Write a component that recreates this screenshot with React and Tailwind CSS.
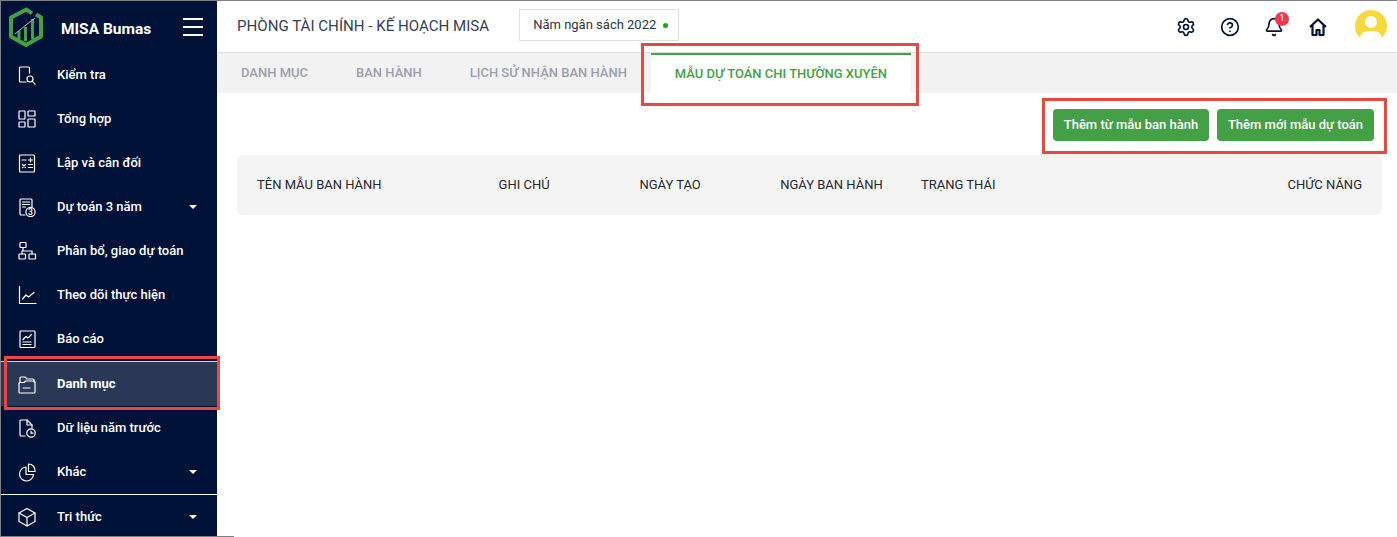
import { Settings, CircleHelp, Bell } from 'lucide-react';

const Ico = ({ children }) => (
  <svg viewBox="0 0 20 20" fill="none" stroke="currentColor" strokeWidth="1.2" strokeLinecap="round" strokeLinejoin="round" className="h-5 w-5 shrink-0 text-white">
    {children}
  </svg>
);

const icons = {
  search: (
    <Ico>
      <path d="M9 17H3.5a1 1 0 0 1-1-1V3a1 1 0 0 1 1-1h8a1 1 0 0 1 1 1v5" />
      <circle cx="13" cy="14" r="3" />
      <path d="M15.2 16.2 18 19" />
    </Ico>
  ),
  grid: (
    <Ico>
      <rect x="2" y="2" width="6" height="8" rx="0.6" />
      <rect x="11" y="2" width="7" height="5" rx="0.6" />
      <rect x="2" y="13" width="6" height="5" rx="0.6" />
      <rect x="11" y="10" width="7" height="8" rx="0.6" />
    </Ico>
  ),
  calc: (
    <Ico>
      <rect x="2.5" y="2" width="15" height="17" rx="1" />
      <path d="M5 7h4M11.5 7h4M13.5 5v4M5.5 11.5l3 3M8.5 11.5l-3 3M11.5 11.5h4M11.5 14.5h4" />
    </Ico>
  ),
  doc3: (
    <Ico>
      <path d="M8 18H4a1 1 0 0 1-1-1V3a1 1 0 0 1 1-1h10a1 1 0 0 1 1 1v7" />
      <path d="M5.5 5h7M5.5 7.5h7M5.5 10h3" />
      <circle cx="13.5" cy="15" r="4.6" />
      <text x="13.5" y="18" textAnchor="middle" fontSize="8.5" fill="currentColor" stroke="none" fontFamily="Roboto, sans-serif">3</text>
    </Ico>
  ),
  tree: (
    <Ico>
      <rect x="3" y="1.5" width="6" height="5" rx="0.5" />
      <rect x="2" y="13" width="6.5" height="5" rx="0.5" />
      <rect x="12" y="13" width="6.5" height="5" rx="0.5" />
      <path d="M6 6.5V10M5 13v-3h10v3" />
    </Ico>
  ),
  chart: (
    <Ico>
      <path d="M2.5 1.5V18.5H19" />
      <path d="M5.5 14l3.5-4 2.5 2 5.5-4.5" />
    </Ico>
  ),
  report: (
    <Ico>
      <rect x="3" y="2" width="15" height="16.5" rx="0.8" />
      <path d="M6 10.5l3-3 2 1.5 3.5-3.5M6 13h8M6 15.5h8" />
    </Ico>
  ),
  folder: (
    <Ico>
      <path d="M3 8.5V4a1 1 0 0 1 1-1h4l2 2h6a1 1 0 0 1 1 1v2" />
      <path d="M2 9.5a1 1 0 0 1 1-1h4l1.5-1.5H17a1 1 0 0 1 1 1v10a1 1 0 0 1-1 1H3a1 1 0 0 1-1-1z" />
      <path d="M6 14h7" />
    </Ico>
  ),
  fileClock: (
    <Ico>
      <path d="M8 18H4a1 1 0 0 1-1-1V3a1 1 0 0 1 1-1h6l5 5v3" />
      <path d="M10 2v5h5" />
      <circle cx="14" cy="15" r="4.2" />
      <path d="M14 13v2.2h2" />
    </Ico>
  ),
  pie: (
    <Ico>
      <path d="M9 5a7 7 0 1 0 7.5 7.5H9z" />
      <path d="M11.5 2a6.5 6.5 0 0 1 6.5 7.5h-6.5z" />
    </Ico>
  ),
  box: (
    <Ico>
      <path d="M10 1.5 18 6v8.5l-8 4.5-8-4.5V6z" />
      <path d="M2 6l8 4.5L18 6M10 10.5V19" />
    </Ico>
  ),
};

const menu = [
  { name: 'Kiểm tra', icon: 'search' },
  { name: 'Tổng hợp', icon: 'grid' },
  { name: 'Lập và cân đối', icon: 'calc' },
  { name: 'Dự toán 3 năm', icon: 'doc3', caret: true },
  { name: 'Phân bổ, giao dự toán', icon: 'tree' },
  { name: 'Theo dõi thực hiện', icon: 'chart' },
  { name: 'Báo cáo', icon: 'report' },
  { name: 'Danh mục', icon: 'folder', active: true },
  { name: 'Dữ liệu năm trước', icon: 'fileClock' },
  { name: 'Khác', icon: 'pie', caret: true },
];

const MenuItem = ({ item }) => (
  <div
    className={`flex shrink-0 items-center gap-[20px] pl-[16px] pr-[20px] text-[13px] text-white ${
      item.active ? 'h-[45px] border-t border-white/80 bg-[#2a3756] font-bold' : 'h-[44px] font-medium'
    }`}
  >
    {icons[item.icon]}
    <span className="flex-1 truncate">{item.name}</span>
    {item.caret && <span className="h-0 w-0 border-x-[4px] border-t-[4px] border-x-transparent border-t-white" />}
  </div>
);

const Sidebar = () => (
  <aside className="flex w-[216px] shrink-0 flex-col bg-[#001238]">
    <div className="flex h-[52px] shrink-0 items-center pl-[7px] pr-[14px]">
      <svg viewBox="0 0 36 40" className="mb-[1px] h-[40px] w-[36px] shrink-0" fill="none">
        <path d="M24 6.5 18.5 2.5 3 10.5v19L18 38l15-8.5v-19L28 7.5" stroke="#43a047" strokeWidth="4" strokeLinejoin="round" />
        <path d="M24.5 12v20M17.5 20v14M11 24v8" stroke="#43a047" strokeWidth="3" />
        <path d="M7 27l11-9 9-7" stroke="#cfd8dc" strokeWidth="0.8" />
      </svg>
      <span className="ml-[17px] mt-[6px] flex-1 text-[15.5px] font-bold text-white">MISA Bumas</span>
      <div className="mb-[1px] flex w-[20px] flex-col gap-[6px]">
        <span className="h-[2px] bg-white" />
        <span className="h-[2px] bg-white" />
        <span className="h-[2px] bg-white" />
      </div>
    </div>
    <div className="flex shrink-0 flex-col">
      {menu.map((item) => (
        <MenuItem key={item.name} item={item} />
      ))}
    </div>
    <div className="shrink-0 border-t border-white">
      <MenuItem item={{ name: 'Tri thức', icon: 'box', caret: true }} />
    </div>
  </aside>
);

const Topbar = () => (
  <header className="flex h-[52px] shrink-0 items-center border-b border-[#e0e0e0] pl-[20px] pr-[10px]">
    <span className="text-[15.1px] text-[#37404f]">PHÒNG TÀI CHÍNH - KẾ HOẠCH MISA</span>
    <div className="mb-[3px] ml-[30px] flex h-[32px] w-[160px] items-center gap-[7px] border border-[#e0e0e0] pl-[13px] text-[13px] text-[#2b3444]">
      Năm ngân sách 2022
      <span className="h-[5px] w-[5px] rounded-full bg-[#1aa31a]" />
    </div>
    <div className="ml-auto flex items-center text-[#001238]">
      <Settings className="h-[20px] w-[20px]" strokeWidth={2} />
      <CircleHelp className="ml-[24px] h-[20px] w-[20px]" strokeWidth={2} />
      <div className="relative ml-[24px]">
        <Bell className="h-[20px] w-[20px]" strokeWidth={2} />
        <span className="absolute -right-[5px] -top-[5px] flex h-[14px] w-[14px] items-center justify-center rounded-full bg-[#f0384f] text-[9px] text-white">1</span>
      </div>
      <svg viewBox="0 0 20 20" className="ml-[24px] h-[20px] w-[20px]" fill="none" stroke="currentColor" strokeWidth="2.2" strokeLinejoin="round">
        <path d="M2 10 10 2.5 18 10M4.5 8.500V18h4v-5h3v5h4V8.500" />
      </svg>
      <div className="relative mb-[2px] ml-[27px] h-[32px] w-[32px] overflow-hidden rounded-full bg-[#f7d93e]">
        <span className="absolute left-[10px] top-[6px] h-[12px] w-[12px] rounded-full bg-white" />
        <span className="absolute left-[5px] top-[21px] h-[16px] w-[22px] rounded-full bg-white" />
      </div>
    </div>
  </header>
);

const tabs = ['DANH MỤC', 'BAN HÀNH', 'LỊCH SỬ NHẬN BAN HÀNH'];
const columns = ['GHI CHÚ', 'NGÀY TẠO', 'NGÀY BAN HÀNH', 'TRẠNG THÁI'];

const App = () => (
  <div className="relative flex h-[537px] w-[1397px] overflow-hidden border-l border-t border-[#7f7f7f] bg-white font-['Roboto',sans-serif]">
    <Sidebar />
    <main className="flex min-w-0 flex-1 flex-col">
      <Topbar />
      <div className="flex h-[40px] shrink-0 bg-[#f2f2f2] text-[13px] font-medium">
        {tabs.map((tab) => (
          <div key={tab} className="flex items-center px-[24px] pb-[1px] text-[#9aa0ab]">{tab}</div>
        ))}
        <div className="flex w-[260px] items-center justify-center border-t-[2px] border-[#43a047] bg-white text-[#43a047]">
          MẪU DỰ TOÁN CHI THƯỜNG XUYÊN
        </div>
      </div>
      <div className="flex justify-end gap-[8px] pr-[23px] pt-[16px]">
        <button className="h-[32px] w-[156px] rounded-[4px] bg-[#43a047] text-[13px] font-medium text-white">Thêm từ mẫu ban hành</button>
        <button className="h-[32px] w-[157px] rounded-[4px] bg-[#43a047] text-[13px] font-medium text-white">Thêm mới mẫu dự toán</button>
      </div>
      <div className="ml-[20px] mr-[15px] mt-[14px] flex h-[60px] items-center rounded-[6px] bg-[#f4f4f4] pl-[20px] pr-[20px] text-[13px] text-[#26262e]">
        <span className="w-[241.6px]">TÊN MẪU BAN HÀNH</span>
        {columns.map((col) => (
          <span key={col} className="w-[140.8px]">{col}</span>
        ))}
        <span className="ml-auto">CHỨC NĂNG</span>
      </div>
    </main>

    {/* annotation boxes drawn over the screenshot */}
    <div className="absolute left-[640px] top-[42px] h-[63px] w-[278px] border-[3px] border-[#e8483f]" />
    <div className="absolute left-[1041px] top-[97px] h-[56px] w-[345px] border-[3px] border-[#e8483f]" />
    <div className="absolute left-[3px] top-[355px] h-[54px] w-[216px] border-[3px] border-[#e8483f]" />
    <div className="absolute bottom-0 left-0 h-px w-[233px] bg-[#7f7f7f]" />
  </div>
);

export default App;
